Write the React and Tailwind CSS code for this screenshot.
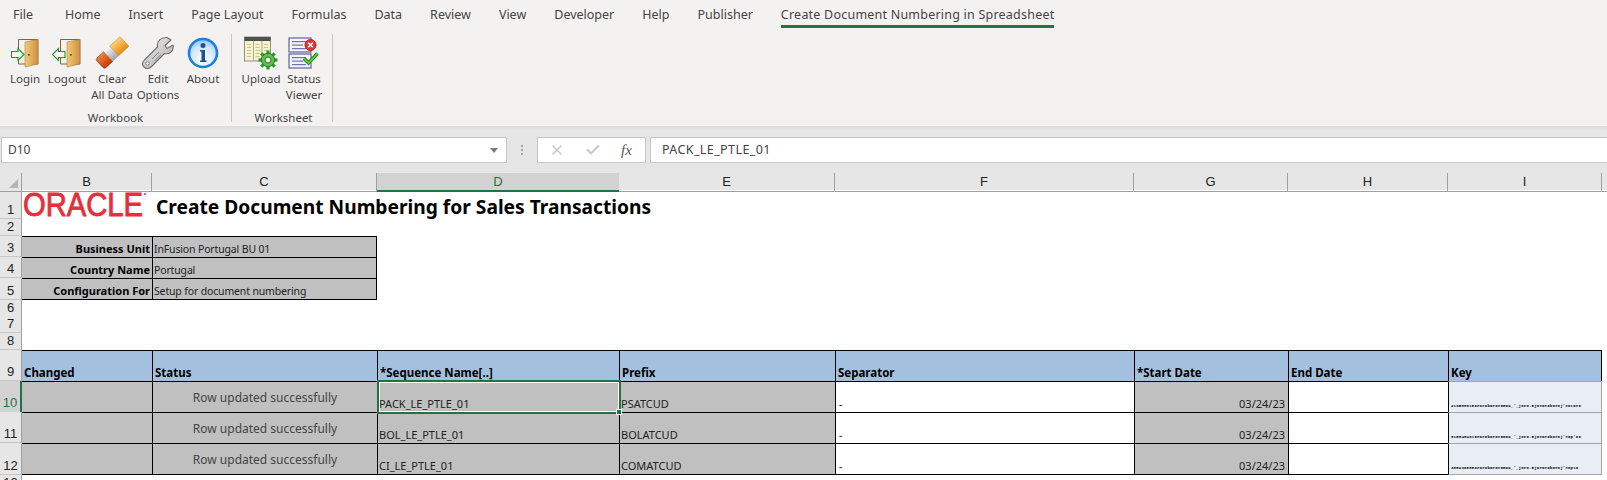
import { X, Check } from 'lucide-react';

const tabs = ['Home', 'Insert', 'Page Layout', 'Formulas', 'Data', 'Review', 'View', 'Developer', 'Help', 'Publisher'];

const cols = 'grid grid-cols-[22px_130px_225px_242px_216px_299px_154px_160px_154px_1fr]';
const cellFont = "font-['Noto_Sans',sans-serif]";

function DoorIcon({ flip }) {
  return (
    <svg width="30" height="30" viewBox="0 0 30 30">
      <defs>
        <linearGradient id={flip ? 'doorB' : 'doorA'} x1="0" x2="1" y1="0" y2="0">
          <stop offset="0" stopColor="#f3c877" />
          <stop offset="1" stopColor="#cf9440" />
        </linearGradient>
      </defs>
      <path d="M8.5 13V1.5H28V26H8.5V20" fill="none" stroke="#8f5e2c" strokeWidth="1" />
      <path d="M15 4L27.5 1.5V26L15 29Z" fill={`url(#${flip ? 'doorB' : 'doorA'})`} stroke="#b27d3a" strokeWidth="0.6" />
      <rect x="18" y="16" width="1.6" height="1.6" fill="#5a3a12" />
      {flip ? (
        <path d="M1 16.5L7 10.5V13.5H13.5V19.5H7V22.5Z" fill="#f2fbe9" stroke="#1e9a1e" strokeWidth="1.1" strokeLinejoin="miter" transform="translate(-0.5 0)" />
      ) : (
        <path d="M14 16.5L8 10.5V13.5H1.5V19.5H8V22.5Z" fill="#f2fbe9" stroke="#1e9a1e" strokeWidth="1.1" strokeLinejoin="miter" />
      )}
    </svg>
  );
}

function EraserIcon() {
  return (
    <svg width="34" height="34" viewBox="0 0 34 34">
      <defs>
        <linearGradient id="eraserTop" x1="0" x2="0" y1="0" y2="1">
          <stop offset="0" stopColor="#fbd27a" />
          <stop offset="1" stopColor="#e98b12" />
        </linearGradient>
        <linearGradient id="eraserMid" x1="0" x2="0" y1="0" y2="1">
          <stop offset="0" stopColor="#f4f5f6" />
          <stop offset="1" stopColor="#9aa3ad" />
        </linearGradient>
        <linearGradient id="eraserLow" x1="0" x2="0" y1="0" y2="1">
          <stop offset="0" stopColor="#f7813a" />
          <stop offset="1" stopColor="#c63a08" />
        </linearGradient>
      </defs>
      <g transform="rotate(-43 17 17)">
        <path d="M2.5 10.5H12V23.5H2.5Q0.5 23.5 0.5 21V13Q0.5 10.5 2.5 10.5Z" fill="url(#eraserLow)" stroke="#7d3a22" strokeWidth="0.7" />
        <rect x="12" y="10.5" width="8" height="13" fill="url(#eraserMid)" />
        <rect x="20" y="10.5" width="14" height="13" fill="url(#eraserTop)" stroke="#c97f1a" strokeWidth="0.5" />
      </g>
    </svg>
  );
}

function WrenchIcon() {
  return (
    <svg width="34" height="34" viewBox="0 0 34 34">
      <defs>
        <linearGradient id="wrench" x1="0" x2="1" y1="0" y2="1">
          <stop offset="0" stopColor="#f2f2f2" />
          <stop offset="1" stopColor="#a9a9a9" />
        </linearGradient>
      </defs>
      <path
        d="M30 4L24 9.5L26 12.5L32 9C33 14 29.5 19 23.5 17.5L10 31C8 33 5 33 3 31C1 29 1.3 26.5 3 24.5L16.5 11C15.5 5 20 1 26 1.5Z"
        fill="url(#wrench)"
        stroke="#6f6f6f"
        strokeWidth="1.1"
        strokeLinejoin="round"
      />
      <circle cx="6.5" cy="27.5" r="1.8" fill="#f4f4f4" stroke="#6f6f6f" strokeWidth="0.8" />
      <path d="M11 23L18 16M13.5 25L20 18.5" stroke="#808080" strokeWidth="0.9" fill="none" />
    </svg>
  );
}

function InfoIcon() {
  return (
    <svg width="32" height="32" viewBox="0 0 32 32">
      <defs>
        <radialGradient id="info" cx="0.5" cy="0.72" r="0.7">
          <stop offset="0" stopColor="#ffffff" />
          <stop offset="0.65" stopColor="#cfe6fb" />
          <stop offset="1" stopColor="#8cc3f3" />
        </radialGradient>
      </defs>
      <circle cx="16" cy="16" r="14" fill="url(#info)" stroke="#1f7ee0" strokeWidth="2.6" />
      <circle cx="16" cy="8.6" r="2.5" fill="#1c4f9c" />
      <path d="M13 13H18V23.5H19.5V25H13V23.5H14.5V14.5H13Z" fill="#1c4f9c" />
    </svg>
  );
}

function Gear({ cx, cy }) {
  const teeth = [0, 45, 90, 135, 180, 225, 270, 315];
  return (
    <g>
      {teeth.map((a) => (
        <rect key={a} x={cx - 1.6} y={cy - 9.5} width="3.2" height="4" fill="#2d9a2d" transform={`rotate(${a} ${cx} ${cy})`} />
      ))}
      <circle cx={cx} cy={cy} r="6.6" fill="#63c04f" stroke="#1d7f1d" strokeWidth="1" />
      <circle cx={cx} cy={cy} r="3" fill="#f5f5e8" stroke="#1d7f1d" strokeWidth="1" />
    </g>
  );
}

function UploadIcon() {
  return (
    <svg width="34" height="34" viewBox="0 0 34 34">
      <rect x="0.5" y="1" width="26" height="24" fill="#f7f3c8" stroke="#8f8f8f" />
      <rect x="0.5" y="1" width="26" height="4" fill="#4f4f4f" />
      <rect x="9" y="5" width="1" height="20" fill="#a9a9a9" />
      <rect x="17.5" y="5" width="1" height="20" fill="#a9a9a9" />
      {[8, 11, 14, 17, 20].map((y) => (
        <g key={y}>
          <rect x="3" y={y} width="4" height="1" fill="#c6c49c" />
          <rect x="11.5" y={y} width="4" height="1" fill="#c6c49c" />
          <rect x="20" y={y} width="4" height="1" fill="#c6c49c" />
        </g>
      ))}
      <Gear cx={24} cy={24} />
    </svg>
  );
}

function StatusIcon() {
  const Box = ({ y }) => (
    <g>
      <rect x="1" y={y} width="22" height="14" fill="#f4f5fb" stroke="#54559a" strokeWidth="1.1" />
      <rect x="4" y={y + 3} width="14" height="1.2" fill="#6f72b5" />
      <rect x="4" y={y + 6.5} width="11" height="1.2" fill="#6f72b5" />
      <rect x="4" y={y + 10} width="14" height="1.2" fill="#6f72b5" />
    </g>
  );
  return (
    <svg width="32" height="32" viewBox="0 0 32 32">
      <Box y={1} />
      <Box y={17} />
      <circle cx="22.5" cy="8" r="5.6" fill="#e5322d" stroke="#a81b1b" strokeWidth="0.8" />
      <path d="M20.2 5.7L24.8 10.3M24.8 5.7L20.2 10.3" stroke="#fff" strokeWidth="1.6" />
      <path d="M16 21.5L20.5 26L29.5 16.5" fill="none" stroke="#1d8a1d" strokeWidth="3.6" />
      <path d="M16 21.5L20.5 26L29.5 16.5" fill="none" stroke="#61d23b" strokeWidth="1.6" />
    </svg>
  );
}

function RibbonButton({ icon, lines, width }) {
  return (
    <div className={`flex flex-col items-center ${width}`}>
      <div className="h-[37px] flex items-center justify-center">{icon}</div>
      {lines.map((l) => (
        <div key={l} className="text-[11.5px] leading-[16px] whitespace-nowrap text-[#444]">{l}</div>
      ))}
    </div>
  );
}

function RibbonGroup({ label, width, pad, children }) {
  return (
    <div className={`flex flex-col h-[92px] ${width} ${pad}`}>
      <div className="flex flex-1">{children}</div>
      <div className="text-[11.5px] leading-[16px] text-center text-[#444] -ml-[6px]">{label}</div>
    </div>
  );
}

function Ribbon() {
  return (
    <div className="bg-[#f3f2f1] h-[126px] font-['Noto_Sans',sans-serif]">
      <div className="flex h-[30px] items-center pl-[13px] gap-[28px] text-[12.5px] text-[#444]">
        <span className="mr-[4px]">File</span>
        {tabs.map((t) => (
          <span key={t}>{t}</span>
        ))}
        <span className="relative tracking-[0.22px]">
          Create Document Numbering in Spreadsheet
          <span className="absolute left-0 right-0 top-[19px] h-[3px] bg-[#217346]" />
        </span>
      </div>
      <div className="flex pt-[4px]">
        <RibbonGroup label="Workbook" width="w-[231px]" pad="pl-[6px]">
          <RibbonButton icon={<DoorIcon />} lines={['Login']} width="w-[38px]" />
          <div className="w-[2px]" />
          <RibbonButton icon={<DoorIcon flip />} lines={['Logout']} width="w-[42px]" />
          <div className="w-[2px]" />
          <RibbonButton icon={<EraserIcon />} lines={['Clear', 'All Data']} width="w-[44px]" />
          <div className="w-px" />
          <RibbonButton icon={<WrenchIcon />} lines={['Edit', 'Options']} width="w-[46px]" />
          <div className="w-[2px]" />
          <RibbonButton icon={<InfoIcon />} lines={['About']} width="w-[40px]" />
        </RibbonGroup>
        <div className="w-px h-[88px] bg-[#c8c6c4]" />
        <RibbonGroup label="Worksheet" width="w-[100px]" pad="pl-[9px]">
          <RibbonButton icon={<UploadIcon />} lines={['Upload']} width="w-[40px]" />
          <div className="w-[3px]" />
          <RibbonButton icon={<StatusIcon />} lines={['Status', 'Viewer']} width="w-[40px]" />
        </RibbonGroup>
        <div className="w-px h-[88px] bg-[#c8c6c4]" />
      </div>
    </div>
  );
}

function FormulaBar() {
  return (
    <div className="h-[47px] pt-[11px] pl-px flex items-start font-['Noto_Sans',sans-serif] bg-gradient-to-b from-[#dcdcdc] from-0% to-[#e6e6e6] to-[10%]">
      <div className="w-[506px] h-[26px] bg-white border border-[#c6c6c6] flex items-center justify-between pl-[6px] pr-[8px] text-[12px] text-[#444]">
        <span>D10</span>
        <span className="w-0 h-0 border-x-[4px] border-x-transparent border-t-[5px] border-t-[#7a7a7a]" />
      </div>
      <div className="w-[30px] h-[26px] flex flex-col items-center justify-center gap-[2px]">
        <span className="w-[2px] h-[2px] bg-[#a6a6a6]" />
        <span className="w-[2px] h-[2px] bg-[#a6a6a6]" />
        <span className="w-[2px] h-[2px] bg-[#a6a6a6]" />
      </div>
      <div className="w-[109px] h-[26px] bg-white border border-[#c6c6c6] flex items-center pl-[11px] text-[#c4c4c4]">
        <X size={16} strokeWidth={2} />
        <Check size={16} strokeWidth={3} className="ml-[20px]" />
        <span className="ml-[20px] text-[15px] italic font-['Liberation_Serif',serif] text-[#555]">fx</span>
      </div>
      <div className="flex-1 ml-[4px] h-[26px] bg-white border border-r-0 border-[#c6c6c6] flex items-center pl-[11px] text-[12.5px] text-[#444] tracking-[0.4px]">
        PACK_LE_PTLE_01
      </div>
    </div>
  );
}

function ColumnHeaders() {
  const letters = ['B', 'C', 'D', 'E', 'F', 'G', 'H', 'I'];
  return (
    <div className={`${cols} h-[17px] bg-[#e6e6e6] font-['Liberation_Sans',sans-serif] text-[13px] leading-[16px] text-[#222]`}>
      <div className="relative border-r border-b border-[#9f9f9f]">
        <span className="absolute right-[3px] bottom-[3px] w-0 h-0 border-l-[9px] border-l-transparent border-b-[9px] border-b-[#b4b4b4]" />
      </div>
      {letters.map((l) =>
        l === 'D' ? (
          <div key={l} className="pt-px text-center bg-[#d2d2d2] border-b-2 border-[#217346] text-[#217346]">{l}</div>
        ) : (
          <div key={l} className="pt-px text-center border-r border-b border-[#9f9f9f]">{l}</div>
        )
      )}
      <div className="border-b border-[#9f9f9f]" />
    </div>
  );
}

function RowNumber({ n, active }) {
  return (
    <div
      className={
        active
          ? "bg-[#d2d2d2] border-r-2 border-[#217346] text-[#217346] flex items-end justify-center pb-px font-['Liberation_Sans',sans-serif] text-[13px] leading-[16px]"
          : "bg-[#e6e6e6] border-r border-b border-r-[#9f9f9f] border-b-[#c6c6c6] text-[#222] flex items-end justify-center font-['Liberation_Sans',sans-serif] text-[13px] leading-[16px]"
      }
    >
      {n}
    </div>
  );
}

function LogoRow() {
  return (
    <div className={`${cols} h-[29px] bg-white`}>
      <RowNumber n={1} />
      <div>
        <svg width="130" height="29" viewBox="0 0 130 29" className="block overflow-visible">
          <text
            x="1"
            y="26"
            fontFamily="Liberation Sans"
            fontSize="34"
            fill="#e4303a"
            stroke="#e4303a"
            strokeWidth="0.9"
            textLength="120"
            lengthAdjust="spacingAndGlyphs"
          >
            ORACLE
          </text>
          <circle cx="123" cy="4" r="1" fill="#e4303a" />
        </svg>
      </div>
      <div className={`col-span-7 pl-[4px] flex items-end ${cellFont} font-bold text-[19.2px] leading-[25px] text-black whitespace-nowrap`}>
        Create Document Numbering for Sales Transactions
      </div>
    </div>
  );
}

function InfoRow({ n, label, value, last }) {
  const edge = last ? 'border-b' : '';
  return (
    <div className={`${cols} ${last ? 'h-[22px]' : 'h-[21px]'} bg-white ${cellFont}`}>
      <RowNumber n={n} />
      <div className={`bg-[#c0c0c0] border-t ${edge} border-black flex items-end justify-end pr-[2px] text-[11px] leading-[16px] font-bold text-black whitespace-nowrap`}>
        {label}
      </div>
      <div className={`bg-[#c0c0c0] border-t ${edge} border-l border-r border-black flex items-end pl-px text-[10.5px] leading-[16px] tracking-[-0.15px] text-[#222] whitespace-nowrap`}>
        {value}
      </div>
    </div>
  );
}

function BlankRow({ n, height }) {
  return (
    <div className={`${cols} ${height} bg-white`}>
      <RowNumber n={n} />
    </div>
  );
}

function HeaderCell({ children, className = '' }) {
  return (
    <div className={`bg-[#a3c1df] border-t border-l border-black flex items-end pl-[2px] text-[11.5px] leading-[16px] font-bold text-black whitespace-nowrap ${className}`}>
      {children}
    </div>
  );
}

function HeaderRow() {
  return (
    <div className={`${cols} h-[31px] bg-white ${cellFont}`}>
      <RowNumber n={9} />
      <HeaderCell className="border-l-0">Changed</HeaderCell>
      <HeaderCell>Status</HeaderCell>
      <HeaderCell>*Sequence Name[..]</HeaderCell>
      <HeaderCell>Prefix</HeaderCell>
      <HeaderCell>Separator</HeaderCell>
      <HeaderCell>*Start Date</HeaderCell>
      <HeaderCell>End Date</HeaderCell>
      <HeaderCell className="border-r">Key</HeaderCell>
    </div>
  );
}

function DataCell({ children, white, className = '' }) {
  return (
    <div className={`${white ? 'bg-white' : 'bg-[#c0c0c0]'} border-t border-l border-black flex items-end pl-[1px] text-[11px] leading-[16px] text-[#222] whitespace-nowrap ${className}`}>
      {children}
    </div>
  );
}

function DataRow({ n, name, prefix, keyText, active, last }) {
  const edge = last ? 'border-b' : '';
  return (
    <div className={`${cols} ${last ? 'h-[32px]' : 'h-[31px]'} bg-white ${cellFont}`}>
      <RowNumber n={n} active={active} />
      <div className={`bg-[#c0c0c0] border-t ${edge} border-black`} />
      <div className={`bg-[#c0c0c0] border-t border-l ${edge} border-black flex justify-center pt-[8px] text-[12px] leading-[16px] text-[#444] whitespace-nowrap`}>
        Row updated successfully
      </div>
      <DataCell className={`${active ? 'relative z-10' : ''} ${edge}`}>
        {name}
        {active && (
          <span className="absolute -left-px -top-[2px] -right-[2px] -bottom-[2px] border-2 border-[#217346]">
            <span className="block w-full h-full border border-white" />
            <span className="absolute -right-[3px] -bottom-[3px] w-[6px] h-[6px] bg-[#217346] border border-white" />
          </span>
        )}
      </DataCell>
      <DataCell className={edge}>{prefix}</DataCell>
      <DataCell white className={`pl-[3px] ${edge}`}>-</DataCell>
      <DataCell className={`justify-end pr-[3px] pl-0 ${edge}`}>03/24/23</DataCell>
      <DataCell white className={edge}> </DataCell>
      <div className={`bg-[#e9edf5] border-t border-l border-r border-t-[#a6a6a6] border-l-black border-r-[#a6a6a6] ${last ? 'border-b border-b-[#a6a6a6]' : ''} flex items-end pl-[2px] pb-[4px] font-['Liberation_Mono',monospace] font-bold text-[4px] leading-[4px] tracking-[0.2px] text-black whitespace-nowrap`}>
        {keyText}
      </div>
    </div>
  );
}

export default function App() {
  return (
    <div className="w-[1607px] h-[480px] overflow-hidden bg-white">
      <Ribbon />
      <FormulaBar />
      <ColumnHeaders />
      <LogoRow />
      <BlankRow n={2} height="h-[17px]" />
      <InfoRow n={3} label="Business Unit" value="InFusion Portugal BU 01" />
      <InfoRow n={4} label="Country Name" value="Portugal" />
      <InfoRow n={5} label="Configuration For" value="Setup for document numbering" last />
      <BlankRow n={6} height="h-[16px]" />
      <BlankRow n={7} height="h-[17px]" />
      <BlankRow n={8} height="h-[17px]" />
      <HeaderRow />
      <DataRow n={10} name="PACK_LE_PTLE_01" prefix="PSATCUD" active keyText="21958891E0e0e0b0e0e0E0K_'_j0e0.5j0e0e0b0e0j'e010e0" />
      <DataRow n={11} name="BOL_LE_PTLE_01" prefix="BOLATCUD" keyText="81E8484910e0e0b0e0e0E0K_'_j0e0.5j0e0e0b0e0j'e0p'00" />
      <DataRow n={12} name="CI_LE_PTLE_01" prefix="COMATCUD" keyText="38E23688E0e0e0b0e0e0E0K_'_j0e0.5j0e0e0b0e0j'e0p10" last />
      <BlankRow n={13} height="h-[6px]" />
    </div>
  );
}
